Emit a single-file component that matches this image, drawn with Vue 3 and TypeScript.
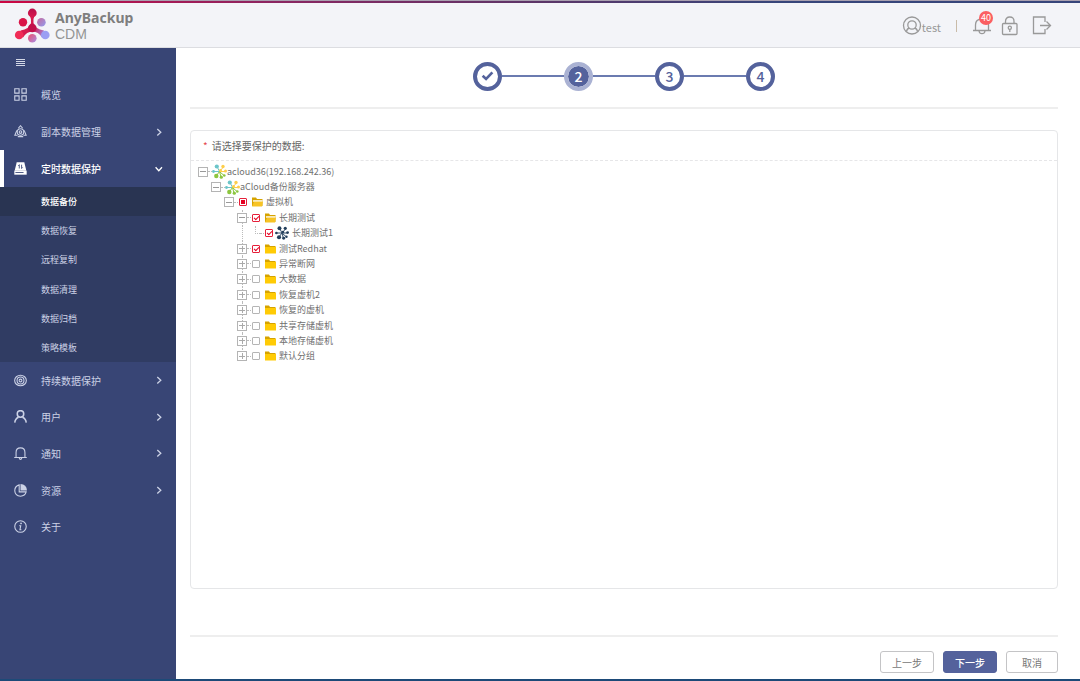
<script setup lang="ts">
import { ref } from 'vue'

type MenuItem = { id: string; label: string; icon: string; arrow?: 'right' | 'down'; active?: boolean }
type CheckState = 'none' | 'off' | 'on' | 'partial'
type TreeRow = {
  id: string
  label: string
  level: number
  toggle: '' | '-' | '+'
  check: CheckState
  icon: 'cloud' | 'open' | 'folder' | 'vm'
}

const topMenu: MenuItem[] = [
  { id: 'overview', label: '概览', icon: 'grid' },
  { id: 'copy', label: '副本数据管理', icon: 'copy', arrow: 'right' },
  { id: 'timed', label: '定时数据保护', icon: 'disk', arrow: 'down', active: true },
]
const subMenu = ['数据备份', '数据恢复', '远程复制', '数据清理', '数据归档', '策略模板']
const bottomMenu: MenuItem[] = [
  { id: 'cdp', label: '持续数据保护', icon: 'target', arrow: 'right' },
  { id: 'user', label: '用户', icon: 'user', arrow: 'right' },
  { id: 'notice', label: '通知', icon: 'bell', arrow: 'right' },
  { id: 'resource', label: '资源', icon: 'pie', arrow: 'right' },
  { id: 'about', label: '关于', icon: 'info' },
]

const folder = (label: string, check: CheckState = 'off'): TreeRow => ({
  id: label, label, level: 3, toggle: '+', check, icon: 'folder',
})
const rows = ref<TreeRow[]>([
  { id: 'root', label: 'acloud36(192.168.242.36)', level: 0, toggle: '-', check: 'none', icon: 'cloud' },
  { id: 'server', label: 'aCloud备份服务器', level: 1, toggle: '-', check: 'none', icon: 'cloud' },
  { id: 'vms', label: '虚拟机', level: 2, toggle: '-', check: 'partial', icon: 'open' },
  { id: 'long', label: '长期测试', level: 3, toggle: '-', check: 'on', icon: 'open' },
  { id: 'long1', label: '长期测试1', level: 4, toggle: '', check: 'on', icon: 'vm' },
  folder('测试Redhat', 'on'),
  folder('异常断网'),
  folder('大数据'),
  folder('恢复虚机2'),
  folder('恢复的虚机'),
  folder('共享存储虚机'),
  folder('本地存储虚机'),
  folder('默认分组'),
])

function toggleCheck(row: TreeRow) {
  row.check = row.check === 'on' ? 'off' : 'on'
}
</script>

<template>
  <div class="page">
    <header class="header">
      <div class="brand">
        <svg class="logo" viewBox="0 0 36 36" aria-hidden="true">
          <defs>
            <linearGradient id="brandFill" gradientUnits="userSpaceOnUse" x1="7" y1="12" x2="33" y2="27">
              <stop offset="0" stop-color="#e5214e" />
              <stop offset=".48" stop-color="#cf174e" />
              <stop offset="1" stop-color="#9da0f5" />
            </linearGradient>
            <linearGradient id="brandSide" x1="0" y1="0" x2="1" y2="1">
              <stop offset="0" stop-color="#c86a9c" />
              <stop offset="1" stop-color="#929cf0" />
            </linearGradient>
            <linearGradient id="brandDot" x1="0" y1="0" x2="1" y2="1">
              <stop offset="0" stop-color="#f04e6c" />
              <stop offset="1" stop-color="#a58fe6" />
            </linearGradient>
            <linearGradient id="brandTop" x1="0" y1="0" x2="0" y2="1">
              <stop offset="0" stop-color="#b70f49" />
              <stop offset="1" stop-color="#d91b4f" />
            </linearGradient>
          </defs>
          <path d="M15.200 6h6Q18.800 11 19.500 15q1.500 6 10.500 7.500L28 29.500Q24.500 23.500 18.500 23.500T9 29.500L6.500 22.500Q15.500 21 17 15 17.600 11 15.200 6Z" fill="url(#brandFill)" />
          <circle cx="5.200" cy="27" r="4.300" fill="#f02c56" />
          <circle cx="31.300" cy="27" r="4.300" fill="#9b9ef3" />
          <circle cx="18.300" cy="5" r="4.400" fill="url(#brandTop)" />
          <circle cx="18.300" cy="20" r="4.200" fill="#c2114b" />
          <circle cx="9" cy="14.300" r="4.200" fill="#d91548" />
          <circle cx="27.400" cy="14.300" r="4.300" fill="url(#brandSide)" />
          <circle cx="18.300" cy="30.300" r="4.300" fill="url(#brandDot)" />
        </svg>
        <div class="brand-text">
          <strong>AnyBackup</strong>
          <span>CDM</span>
        </div>
      </div>
      <div class="tools">
        <button class="account" type="button">
          <svg viewBox="0 0 20 20" class="line-icon big"><circle cx="10" cy="9.500" r="8.500" /><circle cx="10" cy="9" r="4.200" /><path d="M4.500 15.500q.5-3 3-3.500M15.500 15.500q-.5-3-3-3.500" /></svg>
          <span>test</span>
        </button>
        <span class="bar"></span>
        <button class="tool bell" type="button" aria-label="40 条通知">
          <svg viewBox="0 0 20 20" class="line-icon big"><path d="M1 14.500h18M3.500 14V9Q3.500 3 10 3T16.500 9V14M7 15q.5 2.700 3 2.700T13 15" /></svg>
          <span class="badge">40</span>
        </button>
        <button class="tool" type="button" aria-label="锁定">
          <svg viewBox="0 0 20 20" class="line-icon big"><rect x="2.500" y="7.500" width="14.500" height="11" rx="1" /><path d="M5.500 7.500V5.500q0-4.500 4.300-4.500T14 5.500v2M9.800 13v3" /><circle cx="9.800" cy="11.700" r="1.600" /></svg>
        </button>
        <button class="tool exit" type="button" aria-label="退出">
          <svg viewBox="0 0 20 20" class="line-icon big"><path d="M13 6V1H1.500v16.500H13V13M8 9.500h10M14.500 5.500 18.500 9.500 14.500 13.500" /></svg>
        </button>
      </div>
    </header>

    <div class="body">
      <nav class="sidebar">
        <button class="burger" type="button" aria-label="折叠菜单"><i></i><i></i><i></i><i></i></button>
        <template v-for="(group, gi) in [topMenu, bottomMenu]" :key="gi">
          <ul class="menu" :class="gi === 0 ? 'menu-top' : 'menu-bottom'">
            <li v-for="item in group" :key="item.id">
              <a href="#" class="menu-item" :class="{ active: item.active }">
                <svg class="menu-icon" viewBox="0 0 12 12" aria-hidden="true">
                  <path v-if="item.icon === 'grid'" d="M.7.7h4v4h-4zM7.300.7h4v4h-4zM.7 7.300h4v4h-4zM7.300 7.300h4v4h-4z" />
                  <g v-else-if="item.icon === 'copy'"><circle cx="6" cy="6.500" r="3" /><circle cx="6" cy="6.500" r="1.200" /><path d="M4 3 6 .7 8 3M2.600 5 .8 9.500h2.500M9.400 5l1.800 4.500H8.700M3.500 10.700h5" /></g>
                  <g v-else-if="item.icon === 'disk'"><path d="M2.500.2h7l1.900 7.800H.6z" class="solid" /><path d="M.3 8h11.400v3.700H.3z" class="solid" /><path d="M1.300 9.700h7.500" class="cut" /><path d="M4.900 6V2.500l-1 1M7 2.500V6l1-1" class="cut" /></g>
                  <g v-else-if="item.icon === 'target'"><ellipse cx="6" cy="6" rx="5.400" ry="4.900" /><circle cx="6" cy="6" r="3.200" /><circle cx="6" cy="6" r="1.300" /></g>
                  <g v-else-if="item.icon === 'user'" class="strong"><circle cx="6" cy="3.600" r="3" /><path d="M.7 11.700q.5-4 3.500-5M11.300 11.700q-.5-4-3.500-5" /></g>
                  <path v-else-if="item.icon === 'bell'" d="M.2 9.700h11.600M1.900 9.500V5Q1.900.8 6 .8T10.100 5v4.500M4.800 10q.3 1.400 1.200 1.400T7.200 10" />
                  <g v-else-if="item.icon === 'pie'"><path d="M4.800.8Q.7 1.900.7 6.200 1 11 6 11.300q4.300-.2 5.200-4H4.800z" /><path d="M6 0q5.600.3 6 6H6z" class="solid" /></g>
                  <g v-else><circle cx="6" cy="6" r="5.300" /><path d="M4.800 5.300h1.400L5.500 9h1.300" /><circle cx="6.500" cy="3.200" r=".8" class="solid" /></g>
                </svg>
                <span>{{ item.label }}</span>
                <svg v-if="item.arrow" class="arrow" :class="item.arrow" viewBox="0 0 8 8" aria-hidden="true"><path d="M2.300 1 5.800 4.200 2.300 7.400" /></svg>
              </a>
            </li>
          </ul>
          <ul v-if="gi === 0" class="submenu">
            <li v-for="(name, i) in subMenu" :key="name">
              <a href="#" :class="{ current: i === 0 }">{{ name }}</a>
            </li>
          </ul>
        </template>
      </nav>

      <main class="main">
        <ol class="steps">
          <li class="step"><svg viewBox="0 0 12 12" aria-label="1"><path d="M1.500 6.200 4.700 9.200 10.500 3.200" /></svg></li>
          <li class="step now">2</li>
          <li class="step">3</li>
          <li class="step">4</li>
        </ol>

        <section class="panel">
          <h1 class="panel-title"><span class="star">*</span>请选择要保护的数据:</h1>
          <ul class="tree" role="tree">
            <li
              v-for="row in rows"
              :key="row.id"
              class="row"
              :class="'level-' + row.level"
              role="treeitem"
              :aria-level="row.level + 1"
            >
              <button v-if="row.toggle" type="button" class="toggle" :class="{ plus: row.toggle === '+' }" :aria-label="row.toggle === '+' ? '展开' : '收起'"></button>
              <span v-else class="elbow"></span>
              <span class="dots"></span>
              <input
                v-if="row.check !== 'none'"
                :id="'node-' + row.id"
                type="checkbox"
                class="check"
                :class="row.check"
                :checked="row.check === 'on'"
                :indeterminate="row.check === 'partial'"
                @change="toggleCheck(row)"
              />
              <component :is="row.check === 'none' ? 'span' : 'label'" class="node" :for="row.check === 'none' ? undefined : 'node-' + row.id">
                <svg v-if="row.icon === 'cloud' || row.icon === 'vm'" class="cluster" :class="row.icon" viewBox="0 0 15 15" aria-hidden="true">
                  <path class="a" d="M7.500 7.500 5 2.500M7.500 7.500 1.500 7.500" />
                  <path class="b" d="M7.500 7.500 11 3.500M7.500 7.500l6 0" />
                  <path class="c" d="M7.500 7.500 4.500 11.500M7.500 7.500 9 13M8 8l4 3.500" />
                  <circle class="a" cx="4.800" cy="2.500" r="2.100" /><circle class="a" cx="1.500" cy="7.500" r="1.400" />
                  <circle class="b" cx="11" cy="2.500" r="1.700" /><circle class="b" cx="13.500" cy="7" r="1.500" /><circle class="b" cx="8.500" cy="6.500" r="1.400" />
                  <circle class="c" cx="4.300" cy="12" r="2.200" /><circle class="c" cx="9.300" cy="13.200" r="1.600" /><circle class="c" cx="12.300" cy="11.500" r="1.300" />
                </svg>
                <svg v-else class="folder" viewBox="0 0 11 10" aria-hidden="true">
                  <path d="M0 .5h4l1 1.500h5.500V9H0z" fill="#d6a300" />
                  <path v-if="row.icon === 'open'" d="M.8 3.300H10.500V5H1.500z" fill="#fff" />
                  <path v-if="row.icon === 'open'" d="M2 4.500h9L10 9.500H0z" fill="#f7c325" />
                  <path v-else d="M0 3h11v6.500H0z" fill="#ffcb05" />
                </svg>
                <span>{{ row.label }}</span>
              </component>
            </li>
          </ul>
        </section>

        <footer class="actions">
          <button type="button" class="btn">上一步</button>
          <button type="button" class="btn primary">下一步</button>
          <button type="button" class="btn">取消</button>
        </footer>
      </main>
    </div>
  </div>
</template>

<style>
body {
  margin: 0;
}
</style>

<style scoped>
.page {
  display: flex;
  flex-direction: column;
  min-height: 100vh;
  box-sizing: border-box;
  border-bottom: 2px solid #1d4a78;
  background: #fff;
  color: #666;
  font-family: "Noto Sans CJK SC", "Noto Sans", sans-serif;
  font-size: 10px;
  line-height: 15px;
}
button {
  padding: 0;
  border: 0;
  background: none;
  color: inherit;
  font: inherit;
  cursor: pointer;
}
ul,
ol {
  margin: 0;
  padding: 0;
  list-style: none;
}
a {
  color: inherit;
  text-decoration: none;
}

.header {
  display: flex;
  justify-content: space-between;
  box-sizing: border-box;
  height: 48px;
  padding: 4px 28px 0 14px;
  border-bottom: 1px solid #dcdde1;
  background:
    linear-gradient(#a9a0b0, #a9a0b0) 0 0 / 100% 1px no-repeat,
    linear-gradient(90deg, #cb0743, #8c2561 25%, #5b3568 50%, #36457a 72%) 0 1px / 100% 2px no-repeat,
    #f3f4f8;
}
.brand {
  display: flex;
  align-items: center;
  gap: 5px;
}
.logo {
  width: 36px;
  height: 36px;
}
.brand-text {
  display: flex;
  flex-direction: column;
  color: #949494;
  font-family: "Noto Sans", "Open Sans", sans-serif;
  font-size: 14px;
  line-height: 16px;
}
.brand-text strong {
  color: #7e7e7e;
  font-weight: 700;
}
.brand-text span {
  font-family: "Liberation Sans", sans-serif;
}
.tools {
  display: flex;
  align-items: center;
  color: #999;
}
.line-icon {
  display: block;
  fill: none;
  stroke: #999;
  stroke-width: 1.3;
}
.big {
  width: 20px;
  height: 20px;
}
.account {
  display: flex;
  align-items: center;
  font-size: 11px;
}
.account span {
  padding-top: 4px;
}
.bar {
  width: 1px;
  height: 12px;
  margin: 0 15px;
  background: #c9bba8;
}
.tool {
  position: relative;
  margin-right: 8px;
}
.exit {
  margin: 0 0 0 4px;
}
.badge {
  position: absolute;
  top: -5px;
  left: 7px;
  width: 14px;
  height: 14px;
  border-radius: 50%;
  background: #fb5f62;
  color: #fff;
  font-size: 9px;
  line-height: 14px;
}

.body {
  display: flex;
  flex: 1;
}
.sidebar {
  flex: none;
  width: 176px;
  background: #384575;
  color: #ccd2e6;
}
.burger {
  display: grid;
  gap: 1px;
  width: 9px;
  margin: 11px 0 10px 16px;
}
.burger i {
  height: 1px;
  background: #d3d7e6;
}
.menu,
.submenu {
  display: grid;
  grid-auto-rows: 1fr;
}
.menu-top {
  min-height: 111px;
}
.menu-bottom {
  min-height: 183px;
}
.menu-item {
  display: flex;
  align-items: center;
  gap: 14px;
  box-sizing: border-box;
  height: 100%;
  padding: 0 13px 0 10px;
  border-left: 4px solid transparent;
}
.menu-item.active {
  border-color: #fff;
  color: #fff;
  font-weight: 500;
}
.menu-icon {
  width: 13px;
  height: 13px;
  fill: none;
  stroke: currentColor;
  stroke-width: 1;
}
.menu-icon .strong {
  stroke-width: 1.4;
}
.menu-icon .solid {
  fill: currentColor;
  stroke: none;
}
.menu-icon .cut {
  stroke: #384575;
  stroke-width: 0.8;
}
.arrow {
  width: 8px;
  height: 8px;
  margin-left: auto;
  fill: none;
  stroke: currentColor;
  stroke-width: 1.3;
}
.arrow.down {
  transform: rotate(90deg);
}
.submenu {
  min-height: 175px;
  background: #303c63;
  font-size: 9px;
}
.submenu a {
  display: flex;
  align-items: center;
  height: 100%;
  padding-left: 41px;
}
.submenu .current {
  background: #293452;
  color: #fff;
  font-weight: 500;
}

.main {
  display: flex;
  flex: 1;
  flex-direction: column;
  padding: 0 22px 6px 14px;
}
.steps {
  display: flex;
  justify-content: center;
  gap: 62px;
  padding: 14px 0 16px;
  border-bottom: 2px solid #eee;
}
.step {
  position: relative;
  display: flex;
  align-items: center;
  justify-content: center;
  box-sizing: border-box;
  width: 29px;
  height: 29px;
  padding-bottom: 2px;
  border: 4px solid #54629c;
  border-radius: 50%;
  color: #54629c;
  font-size: 14px;
  font-weight: 500;
  line-height: 20px;
}
.step + .step::before {
  position: absolute;
  top: 9px;
  right: 25px;
  width: 62px;
  height: 2px;
  background: #6b7bb0;
  content: "";
}
.step.now {
  border-color: #aab2d3;
  background: #54629c;
  background-clip: padding-box;
  color: #fff;
}
.step svg {
  width: 13px;
  height: 13px;
  fill: none;
  stroke: currentColor;
  stroke-width: 2.4;
}

.panel {
  flex: 1;
  margin: 21px 0 46px;
  border: 1px solid #e5e6e8;
  border-radius: 4px;
}
.panel-title {
  margin: 0 0 3px;
  padding: 7px 12px 6px;
  border-bottom: 1px dashed #e6e6e8;
  font-size: 10px;
  font-weight: 400;
  line-height: 16px;
}
.star {
  margin-right: 4px;
  color: #e5484d;
}
.tree {
  display: grid;
  grid-auto-rows: 1fr;
  min-height: 200px;
  padding-left: 7px;
  color: #707070;
  font-size: 9px;
  line-height: 14px;
}
.row {
  position: relative;
  display: flex;
  align-items: center;
}
.level-1 {
  padding-left: 13px;
}
.level-2 {
  padding-left: 26px;
}
.level-3 {
  padding-left: 39px;
}
.level-4 {
  padding-left: 52px;
}
.level-3::before,
.level-4::before {
  position: absolute;
  top: 0;
  bottom: 0;
  left: 44px;
  border-left: 1px dotted #bbb;
  content: "";
}
.level-3:last-child::before {
  bottom: 50%;
}
.toggle {
  position: relative;
  flex: none;
  box-sizing: border-box;
  width: 10px;
  height: 10px;
  border: 1px solid #b4b4b4;
  background: linear-gradient(#999, #999) center / 6px 1px no-repeat #fff;
}
.toggle.plus {
  background:
    linear-gradient(#aaa, #aaa) center / 6px 1px no-repeat,
    linear-gradient(#aaa, #aaa) center / 1px 6px no-repeat,
    #fff;
}
.elbow {
  align-self: flex-start;
  box-sizing: border-box;
  width: 5px;
  height: 8px;
  margin-left: 5px;
  border-bottom: 1px dotted #bbb;
  border-left: 1px dotted #bbb;
}
.dots {
  width: 4px;
  border-top: 1px dotted #bbb;
}
.check {
  flex: none;
  box-sizing: border-box;
  width: 8px;
  height: 8px;
  margin: 0 0 0 1px;
  border: 1px solid #b5b5b5;
  border-radius: 1px;
  appearance: none;
  background: #fff;
}
.check.on {
  border-color: #e6203a;
}
.check.on::before {
  display: block;
  width: 4px;
  height: 2px;
  margin: 1px 0 0 1px;
  box-sizing: content-box;
  border-bottom: 1px solid #e60021;
  border-left: 1px solid #e60021;
  content: "";
  transform: rotate(-45deg);
}
.check.partial {
  border-color: #e6203a;
  background: linear-gradient(#e60021, #e60021) center / 4px 4px no-repeat #fff;
}
.node {
  display: flex;
  align-items: center;
  white-space: nowrap;
}
.folder {
  width: 11px;
  height: 10px;
  margin: 0 3px 0 5px;
}
.cluster {
  width: 15px;
  height: 15px;
}
.cluster.vm {
  width: 14px;
  height: 14px;
  margin: 0 3px 0 2px;
}
.cluster path {
  fill: none;
  stroke-width: 1;
}
.cluster .a {
  fill: #6cc5c9;
  stroke: #6cc5c9;
}
.cluster .b {
  fill: #fdce4b;
  stroke: #fdce4b;
}
.cluster .c {
  fill: #8cc63f;
  stroke: #8cc63f;
}
.cluster.vm .a,
.cluster.vm .b,
.cluster.vm .c {
  fill: #243f5c;
  stroke: #243f5c;
}
.cluster circle.a,
.cluster circle.b,
.cluster circle.c {
  stroke-width: 0;
}

.actions {
  display: flex;
  justify-content: flex-end;
  gap: 9px;
  padding-top: 14px;
  border-top: 2px solid #eee;
}
.btn {
  box-sizing: border-box;
  height: 22px;
  padding: 0 11px;
  border: 1px solid #c4c4c6;
  border-radius: 3px;
  color: #777;
}
.btn:last-child {
  padding: 0 15px;
}
.btn.primary {
  border-color: #54629c;
  background: #54629c;
  color: #fff;
  font-weight: 500;
}
</style>
